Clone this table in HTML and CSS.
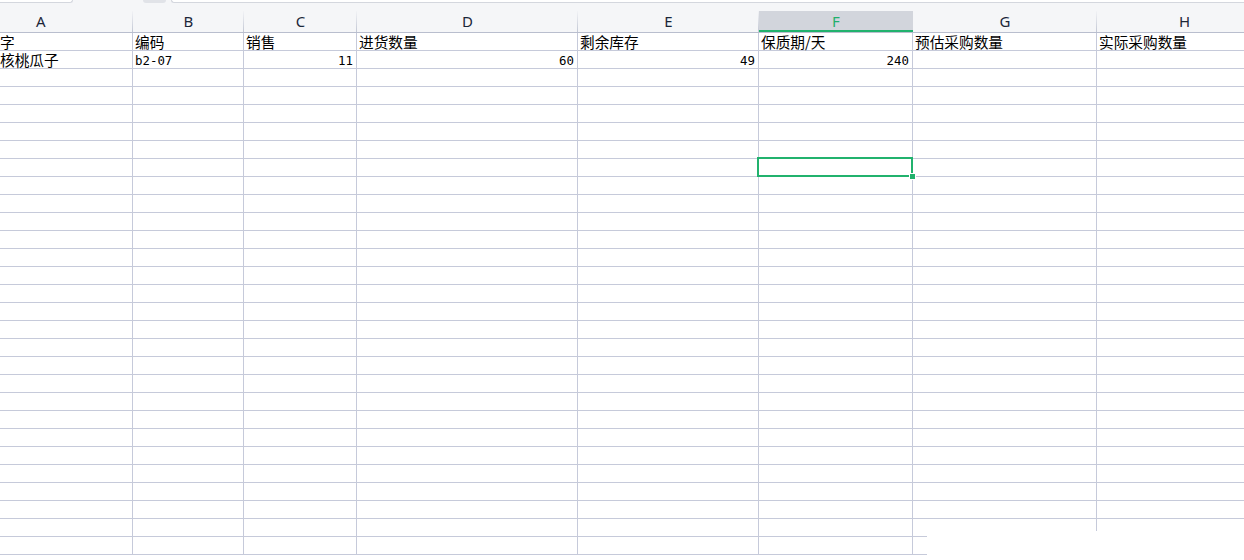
FILE: index.html
```html
<!DOCTYPE html>
<html lang="zh-CN">
<head>
<meta charset="utf-8">
<title>Sheet</title>
<link rel="stylesheet" href="styles.css">
</head>
<body>
<div class="app">
  <div class="tabs">
    <div class="tab-a"></div>
    <div class="tab-pill"></div>
    <div class="tab-b"></div>
  </div>
  <div class="colbar">
    <div class="grid head">
      <div class="hd hd-a">A</div>
      <div class="hd">B</div>
      <div class="hd">C</div>
      <div class="hd">D</div>
      <div class="hd">E</div>
      <div class="hd hd-on">F</div>
      <div class="hd">G</div>
      <div class="hd">H</div>
    </div>
  </div>
  <div class="sheet">
    <div class="grid body">
      <div class="c c-a">字</div><div class="c">编码</div><div class="c">销售</div><div class="c">进货数量</div><div class="c">剩余库存</div><div class="c">保质期/天</div><div class="c">预估采购数量</div><div class="c">实际采购数量</div>
      <div class="c c-a">核桃瓜子</div><div class="c mono">b2-07</div><div class="c mono num">11</div><div class="c mono num">60</div><div class="c mono num">49</div><div class="c mono num">240</div><div class="c"></div><div class="c"></div>
      <div class="c"></div><div class="c"></div><div class="c"></div><div class="c"></div><div class="c"></div><div class="c"></div><div class="c"></div><div class="c"></div>
      <div class="c"></div><div class="c"></div><div class="c"></div><div class="c"></div><div class="c"></div><div class="c"></div><div class="c"></div><div class="c"></div>
      <div class="c"></div><div class="c"></div><div class="c"></div><div class="c"></div><div class="c"></div><div class="c"></div><div class="c"></div><div class="c"></div>
      <div class="c"></div><div class="c"></div><div class="c"></div><div class="c"></div><div class="c"></div><div class="c"></div><div class="c"></div><div class="c"></div>
      <div class="c"></div><div class="c"></div><div class="c"></div><div class="c"></div><div class="c"></div><div class="c"></div><div class="c"></div><div class="c"></div>
      <div class="c"></div><div class="c"></div><div class="c"></div><div class="c"></div><div class="c"></div><div class="c"></div><div class="c"></div><div class="c"></div>
      <div class="c"></div><div class="c"></div><div class="c"></div><div class="c"></div><div class="c"></div><div class="c"></div><div class="c"></div><div class="c"></div>
      <div class="c"></div><div class="c"></div><div class="c"></div><div class="c"></div><div class="c"></div><div class="c"></div><div class="c"></div><div class="c"></div>
      <div class="c"></div><div class="c"></div><div class="c"></div><div class="c"></div><div class="c"></div><div class="c"></div><div class="c"></div><div class="c"></div>
      <div class="c"></div><div class="c"></div><div class="c"></div><div class="c"></div><div class="c"></div><div class="c"></div><div class="c"></div><div class="c"></div>
      <div class="c"></div><div class="c"></div><div class="c"></div><div class="c"></div><div class="c"></div><div class="c"></div><div class="c"></div><div class="c"></div>
      <div class="c"></div><div class="c"></div><div class="c"></div><div class="c"></div><div class="c"></div><div class="c"></div><div class="c"></div><div class="c"></div>
      <div class="c"></div><div class="c"></div><div class="c"></div><div class="c"></div><div class="c"></div><div class="c"></div><div class="c"></div><div class="c"></div>
      <div class="c"></div><div class="c"></div><div class="c"></div><div class="c"></div><div class="c"></div><div class="c"></div><div class="c"></div><div class="c"></div>
      <div class="c"></div><div class="c"></div><div class="c"></div><div class="c"></div><div class="c"></div><div class="c"></div><div class="c"></div><div class="c"></div>
      <div class="c"></div><div class="c"></div><div class="c"></div><div class="c"></div><div class="c"></div><div class="c"></div><div class="c"></div><div class="c"></div>
      <div class="c"></div><div class="c"></div><div class="c"></div><div class="c"></div><div class="c"></div><div class="c"></div><div class="c"></div><div class="c"></div>
      <div class="c"></div><div class="c"></div><div class="c"></div><div class="c"></div><div class="c"></div><div class="c"></div><div class="c"></div><div class="c"></div>
      <div class="c"></div><div class="c"></div><div class="c"></div><div class="c"></div><div class="c"></div><div class="c"></div><div class="c"></div><div class="c"></div>
      <div class="c"></div><div class="c"></div><div class="c"></div><div class="c"></div><div class="c"></div><div class="c"></div><div class="c"></div><div class="c"></div>
      <div class="c"></div><div class="c"></div><div class="c"></div><div class="c"></div><div class="c"></div><div class="c"></div><div class="c"></div><div class="c"></div>
      <div class="c"></div><div class="c"></div><div class="c"></div><div class="c"></div><div class="c"></div><div class="c"></div><div class="c"></div><div class="c"></div>
      <div class="c"></div><div class="c"></div><div class="c"></div><div class="c"></div><div class="c"></div><div class="c"></div><div class="c"></div><div class="c"></div>
      <div class="c"></div><div class="c"></div><div class="c"></div><div class="c"></div><div class="c"></div><div class="c"></div><div class="c"></div><div class="c"></div>
      <div class="c"></div><div class="c"></div><div class="c"></div><div class="c"></div><div class="c"></div><div class="c"></div><div class="c"></div><div class="c"></div>
      <div class="c"></div><div class="c"></div><div class="c"></div><div class="c"></div><div class="c"></div><div class="c"></div><div class="c"></div><div class="c"></div>
      <div class="c"></div><div class="c"></div><div class="c"></div><div class="c"></div><div class="c"></div><div class="c"></div><div class="c"></div><div class="c"></div>
    </div>
    <div class="selection"><span class="handle"></span></div>
    <div class="cover"></div>
  </div>
</div>
</body>
</html>
```

FILE: styles.css
```css
html, body {
  margin: 0;
  padding: 0;
}
body {
  width: 1244px;
  height: 560px;
  overflow: hidden;
  background: #ffffff;
  font-family: "Noto Sans CJK SC", "Noto Sans", sans-serif;
}
.app {
  width: 1244px;
  height: 560px;
  overflow: hidden;
  position: relative;
}
.tabs {
  height: 3px;
  display: flex;
  background: #f5f6f8;
}
.tab-a {
  width: 73px;
  box-sizing: border-box;
  background: #ffffff;
  border-bottom: 1px solid #d4d7de;
  border-right: 1px solid #d4d7de;
  border-bottom-right-radius: 3px;
}
.tab-pill {
  width: 23px;
  margin-left: 70px;
  background: #e1e3e8;
  border-radius: 0 0 3px 3px;
}
.tab-b {
  flex: 1;
  margin-left: 5px;
  box-sizing: border-box;
  background: #ffffff;
  border-left: 1px solid #d4d7de;
  border-bottom: 1px solid #d4d7de;
  border-bottom-left-radius: 4px;
}
.colbar {
  padding-top: 8px;
  background: #f5f6f8;
}
.grid {
  display: grid;
  grid-template-columns: 133px 111px 113px 221px 181px 154px 184px 175px;
  width: 1272px;
}
.head {
  grid-auto-rows: 22px;
}
.hd {
  box-sizing: border-box;
  border-bottom: 1px solid #b9bece;
  text-align: center;
  line-height: 21px;
  font-family: "Noto Sans", "Noto Sans CJK SC", sans-serif;
  font-size: 15px;
  color: #1b2638;
  background: linear-gradient(to bottom, #f2f3f6, #c2c7d4) right top / 1px 100% no-repeat;
}
.hd-a {
  text-align: left;
  padding-left: 36px;
}
.hd-on {
  background-color: #d2d5dc;
  background-image: none;
  color: #1fb06c;
  box-shadow: inset 0 -2px 0 #21b26d;
}
.sheet {
  position: relative;
}
.body {
  grid-auto-rows: 18px;
}
.c {
  box-sizing: border-box;
  border-right: 1px solid #c6cada;
  border-bottom: 1px solid #c6cada;
  padding: 0 3px 0 2px;
  font-size: 14.67px;
  line-height: 17px;
  color: #000000;
  white-space: nowrap;
}
.c-a {
  padding-left: 0;
}
.mono {
  font-family: "DejaVu Sans Mono", "Noto Sans CJK SC", monospace;
  font-size: 12.4px;
  padding-top: 1px;
}
.num {
  text-align: right;
  padding-right: 3px;
}
.selection {
  position: absolute;
  left: 757px;
  top: 124px;
  width: 152px;
  height: 16px;
  border: 2px solid #21b26d;
}
.handle {
  position: absolute;
  left: 150px;
  top: 14px;
  width: 5px;
  height: 5px;
  background: #21b26d;
  border: 1px solid #ffffff;
}
.cover {
  position: absolute;
  left: 927px;
  top: 498px;
  width: 400px;
  height: 100px;
  background: #ffffff;
}
```
